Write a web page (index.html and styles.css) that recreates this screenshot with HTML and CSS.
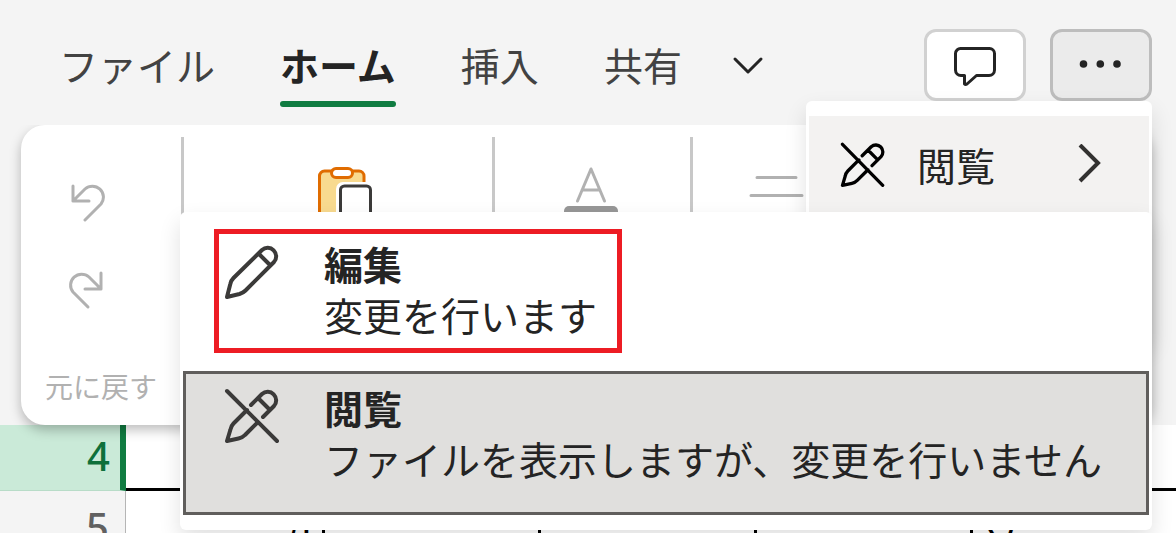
FILE: index.html
```
<!DOCTYPE html>
<html lang="ja">
<head>
    <meta charset="UTF-8">
    <meta name="viewport" content="width=device-width, initial-scale=1.0">
    <title>ホーム</title>
    <link rel="stylesheet" href="styles.css">
</head>
<body>
    <header class="topbar">
        <nav class="tabs">
            <button type="button" class="tab">ファイル</button>
            <button type="button" class="tab active">ホーム</button>
            <button type="button" class="tab">挿入</button>
            <button type="button" class="tab">共有</button>
            <button type="button" class="tab-more" aria-label="その他のタブ">
                <svg width="32" height="20" viewBox="0 0 32 20"><path d="M3 3l13 13 13-13"/></svg>
            </button>
        </nav>
        <div class="actions">
            <button type="button" class="action" aria-label="コメント">
                <svg width="48" height="48" viewBox="0 0 48 48"><path d="M10 7.500h28.500a5 5 0 0 1 5 5V29a5.500 5.500 0 0 1-5.500 5.500H25.500L16 43q-1.500 1-2.500 0V34.500H10a5.500 5.500 0 0 1-5.500-5.500V12.500a5 5 0 0 1 5.500-5z"/></svg>
            </button>
            <div class="more">
                <button type="button" class="action pressed" aria-label="その他">
                    <svg class="dots" width="48" height="8" viewBox="0 0 48 8"><circle cx="6.500" cy="3" r="3.800"/><circle cx="23.300" cy="3" r="3.800"/><circle cx="40" cy="3" r="3.800"/></svg>
                </button>
                <div class="menu">
                    <button type="button" class="menu-item">
                        <svg class="pen" width="46" height="46" viewBox="0 0 56 56"><path d="M3 4l49 50M27 18L38 7a8.500 8.500 0 0 1 12 12L39 30M34 11l12 12M23 23L9.500 36.500Q7 39 6.300 43L3 54l11.500-2.500q4-.8 6.500-3.500L34 35"/></svg>
                        <span>閲覧</span>
                        <svg class="arrow" width="24" height="40" viewBox="0 0 24 40"><path d="M3 1l18 18L3 37"/></svg>
                    </button>
                </div>
                <div class="submenu">
                    <button type="button" class="mode">
                        <svg class="pen" width="56" height="56" viewBox="0 0 56 56"><path d="M3 53l3.300-13Q7 36.500 9.500 34L38 6a8.500 8.500 0 0 1 12 12L21.500 46.500q-2.500 2.500-6 3.500zM34.500 9.500l12 12"/></svg>
                        <span class="mode-text"><strong>編集</strong>変更を行います</span>
                    </button>
                    <button type="button" class="mode selected">
                        <svg class="pen" width="56" height="56" viewBox="0 0 56 56"><path d="M3 3l50 50M27 17L38 6a8.500 8.500 0 0 1 12 12L39 29M34 10l12 12M23 22L9.500 35.500Q7 38 6.300 42L3 53l11.500-2.500q4-.8 6.500-3.500L34 34"/></svg>
                        <span class="mode-text"><strong>閲覧</strong>ファイルを表示しますが、変更を行いません</span>
                    </button>
                    <div class="highlight"></div>
                </div>
            </div>
        </div>
    </header>

    <section class="ribbon">
        <div class="group undo">
            <button type="button" class="tool" aria-label="元に戻す">
                <svg width="40" height="40" viewBox="0 0 40 40"><path d="M5 4v15h16M5 19L17 7a11 11 0 0 1 16 15L17 38"/></svg>
            </button>
            <button type="button" class="tool" aria-label="やり直し">
                <svg width="40" height="40" viewBox="0 0 40 40"><path d="M33 3v16H17M33 19L21 7A11 11 0 0 0 5 22L20 37"/></svg>
            </button>
            <span class="group-label">元に戻す</span>
        </div>
        <div class="group clipboard">
            <button type="button" class="tool" aria-label="貼り付け">
                <svg width="60" height="60" viewBox="0 0 60 60"><path class="board" d="M3.500 58V11a5 5 0 0 1 5-5H43a5 5 0 0 1 5 5v47z"/><rect class="clip" x="15.500" y="3.500" width="21" height="9" rx="4.500"/><path class="gap" d="M20 60V24a7 7 0 0 1 7-7h30v43z"/><path class="page" d="M24.500 60V25a4 4 0 0 1 4-4h22a4 4 0 0 1 4 4v35z"/></svg>
            </button>
        </div>
        <div class="group font">
            <button type="button" class="tool" aria-label="フォント">
                <svg width="60" height="60" viewBox="0 0 60 60"><path d="M16.500 36L30 4l13.500 32M21 25h18"/><rect class="swatch" x="3" y="41" width="54" height="16" rx="5"/></svg>
            </button>
        </div>
        <div class="group align">
            <button type="button" class="tool" aria-label="配置">
                <svg width="60" height="60" viewBox="0 0 60 60"><path d="M10 12.500h39M4 30.500h51M10 49.500h39"/></svg>
            </button>
        </div>
    </section>

    <table class="sheet">
        <tbody>
            <tr class="current">
                <th scope="row">4</th>
                <td class="first"></td><td></td><td></td><td></td><td></td>
            </tr>
            <tr>
                <th scope="row">5</th>
                <td class="first">(l</td><td></td><td></td><td></td><td>ソ</td>
            </tr>
        </tbody>
    </table>
</body>
</html>
```
FILE: styles.css
```
* {
    box-sizing: border-box;
}
body {
    margin: 0;
    height: 100vh;
    overflow: hidden;
    background-color: #f4f4f4;
    color: #242424;
    font-family: "Noto Sans CJK JP", "Noto Sans", sans-serif;
    font-size: 39px;
}
button {
    margin: 0;
    padding: 0;
    border: none;
    background: none;
    color: inherit;
    font: inherit;
    cursor: pointer;
}
svg {
    display: block;
    flex: none;
    fill: none;
    stroke: #242424;
    stroke-width: 3;
    stroke-linecap: round;
    stroke-linejoin: round;
}

/* top bar */
.topbar {
    display: flex;
    justify-content: space-between;
    height: 125px;
    padding: 29px 24px 0 59px;
}
.tabs {
    display: flex;
    align-items: flex-start;
    gap: 65px;
}
.tab {
    height: 78px;
    padding-bottom: 8px;
    color: #424242;
    line-height: 70px;
}
.tab.active {
    position: relative;
    color: #242424;
    font-weight: bold;
}
.tab.active::after {
    content: "";
    position: absolute;
    left: 0;
    right: 0;
    bottom: 0;
    height: 6px;
    border-radius: 3px;
    background-color: #107c41;
}
.tab-more {
    height: 74px;
    margin-left: -15px;
}
.actions {
    display: flex;
    gap: 24px;
}
.action {
    display: flex;
    align-items: center;
    justify-content: center;
    width: 102px;
    height: 72px;
    border: 3px solid #d1d1d1;
    border-radius: 12px;
    background-color: #fff;
}
.action.pressed {
    border-color: #bdbdbd;
    background-color: #ebebeb;
}
.dots {
    overflow: visible;
    fill: #242424;
    stroke: none;
}
.more {
    position: relative;
}

/* drop-down menus */
.menu,
.submenu {
    position: absolute;
    right: 0;
    padding: 15px 3px;
    border-radius: 6px;
    background-color: #fff;
    box-shadow: 0 10px 22px rgba(0, 0, 0, 0.12);
}
.menu {
    z-index: 1;
    top: 72px;
    width: 346px;
    height: 240px;
}
.menu-item {
    display: flex;
    align-items: center;
    width: 100%;
    height: 97px;
    padding: 0 48px 2px 31px;
    background-color: #f3f2f1;
}
.menu-item .pen {
    stroke: #000;
    stroke-width: 4;
}
.menu-item span {
    margin-left: 31px;
}
.menu-item .arrow {
    margin-left: auto;
    stroke: #323130;
    stroke-width: 4;
    stroke-linecap: butt;
    stroke-linejoin: miter;
}
.submenu {
    z-index: 2;
    top: 183px;
    width: 972px;
}
.mode {
    display: flex;
    align-items: flex-start;
    width: 100%;
    height: 144px;
    padding: 8px 38px;
    border: 3px solid transparent;
    text-align: left;
    white-space: nowrap;
}
.mode.selected {
    border-color: #605e5c;
    background-color: #e0dfdd;
}
.mode .pen {
    margin-top: 6px;
    stroke: #3b3a39;
    stroke-width: 4;
}
.mode-text {
    margin-left: 44px;
    line-height: 51px;
}
.mode-text strong {
    display: block;
}
.highlight {
    position: absolute;
    top: 17px;
    left: 34px;
    width: 408px;
    height: 124px;
    border: 5px solid #ed1c24;
    pointer-events: none;
}

/* ribbon */
.ribbon {
    display: flex;
    height: 300px;
    margin: 0 24px 0 21px;
    padding: 12px 0;
    border-radius: 24px;
    background-color: #fff;
    box-shadow: 0 5px 12px rgba(0, 0, 0, 0.26);
    clip-path: inset(0 -30px -30px -30px);
}
.group {
    padding-top: 28px;
    border-right: 3px solid #c8c8c8;
}
.group svg {
    stroke: #b1b1b1;
}
.group:last-child {
    border-right: none;
}
.tool {
    display: block;
    margin: 0 auto;
}
.undo {
    display: flex;
    flex-direction: column;
    align-items: center;
    width: 163px;
    padding-top: 45px;
}
.undo .tool {
    margin: 0 26px 48px 0;
}
.group-label {
    margin-top: 8px;
    color: #b1b1b1;
    font-size: 28px;
    line-height: 40px;
}
.clipboard {
    width: 311px;
    padding-left: 16px;
}
.group .board {
    fill: #f8da8f;
    stroke: #e06c00;
}
.group .clip {
    fill: #fff;
    stroke: #e06c00;
}
.group .gap {
    fill: #fff;
    stroke: none;
}
.group .page {
    fill: #fff;
    stroke: #3b3a39;
}
.font {
    width: 198px;
    padding-right: 4px;
}
.group .swatch {
    fill: #979797;
    stroke: none;
}
.align {
    width: 168px;
}

/* sheet */
.sheet {
    width: 100%;
    border-collapse: separate;
    border-spacing: 0;
    table-layout: fixed;
    background-color: #fff;
}
.sheet th {
    width: 126px;
    height: 72px;
    padding: 0 16px 0 0;
    border-right: 1px solid #b5b5b5;
    background-color: #f4f4f4;
    color: #616161;
    font-family: "Noto Sans", sans-serif;
    font-size: 40px;
    font-weight: 500;
    line-height: 72px;
    text-align: right;
    vertical-align: top;
}
.sheet td {
    width: 216px;
    padding: 16px 0 0 8px;
    border-right: 3px solid #000;
    color: #000;
    line-height: 56px;
    vertical-align: top;
}
.sheet td.first {
    width: 199px;
    padding: 16px 10px 0 0;
    text-align: right;
}
.sheet td:last-child {
    width: auto;
    border-right: none;
}
.sheet .current th {
    height: 66px;
    padding-right: 10px;
    border-right: 6px solid #107c41;
    border-bottom: 1px solid #b8dcc8;
    background-color: #caead8;
    color: #0f703b;
    line-height: 62px;
}
.sheet .current td {
    padding: 0;
    border-right: none;
    border-bottom: 3px solid #000;
}
```
